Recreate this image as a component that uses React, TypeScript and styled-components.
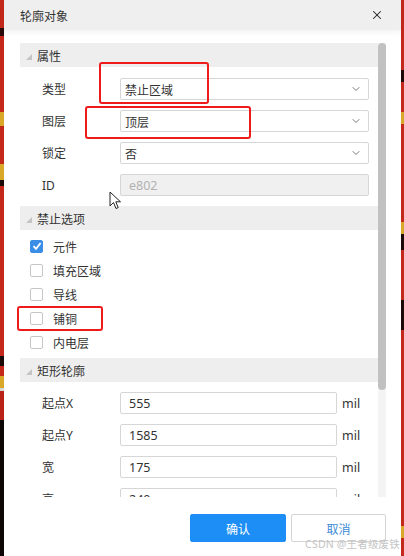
import React from "react";
import styled, { createGlobalStyle } from "styled-components";
import { X, ChevronDown } from "lucide-react";

const Global = createGlobalStyle`
  html, body { margin: 0; padding: 0; }
  body {
    width: 404px; height: 556px; overflow: hidden;
    font-family: "Noto Sans", "Noto Sans CJK SC", sans-serif;
    font-size: 12px; color: #333;
  }
`;

const Page = styled.div`
  position: relative;
  display: flex;
  width: 404px;
  height: 556px;
  overflow: hidden;
`;

const Strip = styled.div<{ $w: number; $side: "l" | "r" }>`
  width: ${(p) => p.$w}px;
  flex: none;
  background: ${(p) =>
    p.$side === "l"
      ? `linear-gradient(to bottom, #c3281b 0 28px, #2a0a08 28px 36px, #c3281b 36px 112px, #d9a828 112px 126px, #c3281b 126px 164px, #d9a828 164px 180px, #1a0a08 180px 186px, #c3281b 186px 356px, #1a0a08 356px 366px, #c3281b 366px 376px, #d9a828 376px 388px, #d8d8d8 388px 391px, #b82217 391px 420px, #0c0606 420px 556px)`
      : `linear-gradient(to bottom, #c3281b 0 70px, #1a0a08 70px 82px, #c3281b 82px 112px, #d9a828 112px 124px, #c3281b 124px 222px, #d9a828 222px 234px, #1a0a08 234px 250px, #c3281b 250px 300px, #1a0a08 300px 330px, #c3281b 330px 526px, #d9a828 526px 538px, #c3281b 538px 556px)`};
`;

const Dialog = styled.div`
  position: relative;
  flex: 1;
  display: flex;
  flex-direction: column;
  background: #fff;
`;

const TitleBar = styled.div`
  height: 30px;
  flex: none;
  display: flex;
  align-items: center;
  justify-content: space-between;
  padding: 0 17px 0 16px;
  background: #efefef;
  box-shadow: 0 2px 5px rgba(0, 0, 0, 0.06);
  font-family: "Noto Sans CJK SC", sans-serif;
  font-size: 12px;
  color: #333;
`;

const CloseBtn = styled.span`
  display: flex;
  color: #222;
`;

const ScrollArea = styled.div`
  margin: 13px 15px 0 16px;
  height: 454px;
  flex: none;
  display: flex;
  overflow: hidden;
`;

const Content = styled.div`
  flex: 1;
  display: flex;
  flex-direction: column;
  & > * { flex-shrink: 0; }
`;

const ScrollTrack = styled.div`
  width: 8px;
  flex: none;
  background: #f4f4f4;
  display: flex;
  flex-direction: column;
`;

const Thumb = styled.div`
  height: 347px;
  background: #c1c1c1;
  border-radius: 4px;
`;

const SectionHeader = styled.div`
  height: 24px;
  display: flex;
  align-items: center;
  gap: 5px;
  padding-left: 6px;
  background: #eeeeee;
  font-family: "Noto Sans CJK SC", sans-serif;
  color: #333;
`;

const Tri = styled.span`
  width: 0;
  height: 0;
  border-left: 6px solid transparent;
  border-bottom: 6px solid #c4c4c4;
  margin-top: 3px;
`;

const FieldGroup = styled.div<{ $pt: number; $pb: number }>`
  display: flex;
  flex-direction: column;
  gap: 10px;
  padding: ${(p) => p.$pt}px 0 ${(p) => p.$pb}px 0;
`;

const Row = styled.div`
  display: flex;
  align-items: center;
  height: 22px;
  flex-shrink: 0;
`;

const Label = styled.span`
  width: 78px;
  padding-left: 22px;
  flex: none;
  font-family: "Noto Sans", "Noto Sans CJK SC", sans-serif;
  color: #333;
`;

const Select = styled.div`
  width: 249px;
  height: 22px;
  box-sizing: border-box;
  border: 1px solid #d6d6d6;
  border-radius: 2px;
  display: flex;
  align-items: center;
  justify-content: space-between;
  padding: 0 6px 0 4px;
  font-family: "Noto Sans CJK SC", sans-serif;
  color: #333;
`;

const Input = styled.div<{ $disabled?: boolean; $w: number }>`
  width: ${(p) => p.$w}px;
  height: 22px;
  box-sizing: border-box;
  border: 1px solid #d6d6d6;
  border-radius: 2px;
  display: flex;
  align-items: center;
  padding-left: 8px;
  font-family: "Noto Sans", sans-serif;
  font-size: 12.5px;
  background: ${(p) => (p.$disabled ? "#f0f0f0" : "#fff")};
  color: ${(p) => (p.$disabled ? "#b0b0b0" : "#333")};
`;

const Unit = styled.span`
  margin-left: 5px;
  font-family: "Noto Sans", sans-serif;
  font-size: 12.5px;
  color: #333;
`;

const CheckGroup = styled.div`
  display: flex;
  flex-direction: column;
  padding: 4px 0 4px 0;
`;

const CheckRow = styled.div`
  height: 24px;
  flex-shrink: 0;
  display: flex;
  align-items: center;
  gap: 10px;
  padding-left: 10px;
  font-family: "Noto Sans CJK SC", sans-serif;
`;

const Box = styled.span<{ $on?: boolean }>`
  width: 13px;
  height: 13px;
  box-sizing: border-box;
  border-radius: 2px;
  border: 1px solid ${(p) => (p.$on ? "#3a8ee6" : "#c6c6c6")};
  background: ${(p) => (p.$on ? "#3a8ee6" : "#fff")};
  display: flex;
  align-items: center;
  justify-content: center;
`;

const Footer = styled.div`
  flex: 1;
  display: flex;
  justify-content: flex-end;
  align-items: flex-start;
  gap: 5px;
  padding: 17px 15px 0 0;
`;

const Button = styled.button<{ $primary?: boolean }>`
  width: ${(p) => (p.$primary ? 96 : 95)}px;
  height: 28px;
  border-radius: 2px;
  font-family: "Noto Sans CJK SC", sans-serif;
  font-size: 12px;
  cursor: pointer;
  border: 1px solid ${(p) => (p.$primary ? "#1c8ef5" : "#d4d4d4")};
  background: ${(p) => (p.$primary ? "#1c8ef5" : "#fff")};
  color: ${(p) => (p.$primary ? "#fff" : "#3b8ad6")};
`;

const Mark = styled.div<{ $l: number; $t: number; $w: number; $h: number }>`
  position: absolute;
  left: ${(p) => p.$l}px;
  top: ${(p) => p.$t}px;
  width: ${(p) => p.$w}px;
  height: ${(p) => p.$h}px;
  box-sizing: border-box;
  border: 2.5px solid #ef1b1b;
  border-radius: 3px;
  pointer-events: none;
`;

const Watermark = styled.div`
  position: absolute;
  right: 4px;
  bottom: 5px;
  font-family: "Noto Sans", "Noto Sans CJK SC", sans-serif;
  font-size: 10.5px;
  color: #c4c4c4;
  letter-spacing: 0.2px;
`;

const Cursor = styled.svg`
  position: absolute;
  left: 109px;
  top: 191px;
`;

const Section: React.FC<{ title: string }> = ({ title }) => (
  <SectionHeader>
    <Tri />
    {title}
  </SectionHeader>
);

const Chev = () => <ChevronDown size={12} strokeWidth={1.6} color="#555" />;

export default function App() {
  const checks = [
    { t: "元件", on: true },
    { t: "填充区域" },
    { t: "导线" },
    { t: "铺铜" },
    { t: "内电层" },
  ];
  const dims = [
    ["起点X", "555"],
    ["起点Y", "1585"],
    ["宽", "175"],
    ["高", "240"],
  ];
  return (
    <>
      <Global />
      <Page>
        <Strip $w={4} $side="l" />
        <Dialog>
          <TitleBar>
            <span>轮廓对象</span>
            <CloseBtn>
              <X size={14} strokeWidth={1.8} />
            </CloseBtn>
          </TitleBar>
          <ScrollArea>
            <Content>
              <Section title="属性" />
              <FieldGroup $pt={11} $pb={10}>
                <Row>
                  <Label>类型</Label>
                  <Select>
                    禁止区域
                    <Chev />
                  </Select>
                </Row>
                <Row>
                  <Label>图层</Label>
                  <Select>
                    顶层
                    <Chev />
                  </Select>
                </Row>
                <Row>
                  <Label>锁定</Label>
                  <Select>
                    否
                    <Chev />
                  </Select>
                </Row>
                <Row>
                  <Label>ID</Label>
                  <Input $w={249} $disabled>
                    e802
                  </Input>
                </Row>
              </FieldGroup>
              <Section title="禁止选项" />
              <CheckGroup>
                {checks.map((c) => (
                  <CheckRow key={c.t}>
                    <Box $on={c.on}>
                      {c.on && (
                        <svg width="10" height="10" viewBox="0 0 10 10">
                          <path
                            d="M1.5 5.2 L4 7.8 L8.6 2"
                            fill="none"
                            stroke="#fff"
                            strokeWidth="1.8"
                          />
                        </svg>
                      )}
                    </Box>
                    {c.t}
                  </CheckRow>
                ))}
              </CheckGroup>
              <Section title="矩形轮廓" />
              <FieldGroup $pt={10} $pb={0}>
                {dims.map(([l, v]) => (
                  <Row key={l}>
                    <Label>{l}</Label>
                    <Input $w={217}>{v}</Input>
                    <Unit>mil</Unit>
                  </Row>
                ))}
              </FieldGroup>
            </Content>
            <ScrollTrack>
              <Thumb />
            </ScrollTrack>
          </ScrollArea>
          <Footer>
            <Button $primary>确认</Button>
            <Button>取消</Button>
          </Footer>
        </Dialog>
        <Strip $w={3} $side="r" />
        <Mark $l={99} $t={62} $w={110} $h={42} />
        <Mark $l={85} $t={106} $w={166} $h={33} />
        <Mark $l={17} $t={306} $w={86} $h={25} />
        <Cursor width="14" height="20" viewBox="0 0 14 20">
          <path
            d="M1 1 L1 15 L4.5 11.5 L7 17.5 L9.2 16.6 L6.8 10.8 L11.5 10.8 Z"
            fill="#fff"
            stroke="#222"
            strokeWidth="1"
          />
        </Cursor>
        <Watermark>CSDN @王者级废铁</Watermark>
      </Page>
    </>
  );
}
